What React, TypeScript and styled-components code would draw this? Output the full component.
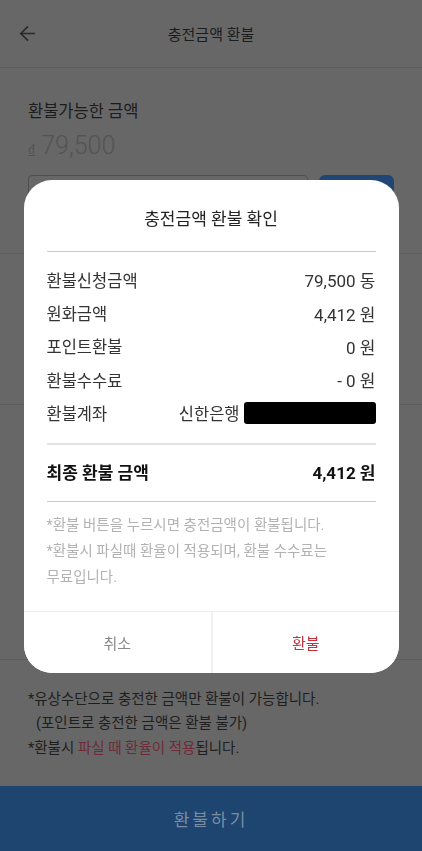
import React from "react";
import styled, { createGlobalStyle } from "styled-components";
import { ArrowLeft } from "lucide-react";

const GlobalStyle = createGlobalStyle`
  html, body { margin: 0; padding: 0; }
  body {
    background: #676767;
    font-family: Roboto, "Noto Sans CJK KR", "Noto Sans", sans-serif;
    -webkit-font-smoothing: antialiased;
  }
  * { box-sizing: border-box; }
`;

const Page = styled.div`
  min-height: 851px;
  display: flex;
  flex-direction: column;
  background: #676767;
`;

const Header = styled.header`
  height: 68px;
  display: grid;
  grid-template-columns: 56px 1fr 56px;
  align-items: center;
  border-bottom: 1px solid #5e5e5e;
`;

const BackButton = styled.button`
  border: 0;
  background: none;
  padding: 0 0 0 16px;
  display: flex;
  align-items: center;
  color: #2a2a2a;
`;

const HeaderTitle = styled.h1`
  margin: 0;
  text-align: center;
  font-size: 15px;
  font-weight: 400;
  color: #1c1c1c;
`;

const Section = styled.section<{ $h?: number }>`
  padding: 33px 28px 36px;
  border-bottom: 1px solid #5e5e5e;
  ${(p) => (p.$h ? `height: ${p.$h}px; padding: 0;` : "")}
`;

const Label = styled.div`
  font-size: 16.5px;
  line-height: 22px;
  color: #1c1c1c;
`;

const Amount = styled.div`
  display: flex;
  align-items: baseline;
  gap: 6px;
  margin-top: 8px;
  color: #545454;
  line-height: 30px;
`;

const Currency = styled.span`
  font-size: 12px;
  text-decoration: underline;
`;

const AmountValue = styled.span`
  font-size: 25px;
  font-weight: 300;
`;

const InputRow = styled.div`
  display: flex;
  gap: 11px;
  margin-top: 10px;
`;

const FakeInput = styled.div`
  flex: 1;
  height: 42px;
  border: 1px solid #4e4e4e;
  border-radius: 4px;
`;

const SmallBlue = styled.div`
  width: 75px;
  height: 42px;
  border-radius: 6px;
  background: #1f4675;
`;

const Notes = styled.div`
  padding: 28px 28px 0;
  font-size: 14.5px;
  line-height: 24px;
  color: #1e1e1e;
`;

const NoteLine = styled.p<{ $indent?: boolean; $gap?: number }>`
  margin: ${(p) => p.$gap ?? 0}px 0 0;
  padding-left: ${(p) => (p.$indent ? "8px" : "0")};
`;

const Red = styled.span`
  color: #6e2b37;
`;

const BottomButton = styled.button`
  margin-top: auto;
  height: 65px;
  border: 0;
  background: #1e4470;
  color: #7b8ca3;
  font-family: inherit;
  font-size: 17px;
  letter-spacing: 3px;
  width: 100%;
`;

const Backdrop = styled.div`
  position: fixed;
  inset: 0;
  display: flex;
  align-items: center;
  justify-content: center;
  padding-top: 2px;
`;

const Modal = styled.div`
  width: 375px;
  background: #fff;
  border-radius: 28px;
  overflow: hidden;
  display: flex;
  flex-direction: column;
`;

const ModalBody = styled.div`
  padding: 27px 23px 0;
`;

const ModalTitle = styled.h2`
  margin: 0;
  text-align: center;
  font-size: 17px;
  line-height: 24px;
  font-weight: 400;
  color: #222;
`;

const Divider = styled.hr<{ $top: number; $bottom: number; $color?: string; $w?: number }>`
  border: 0;
  height: ${(p) => p.$w ?? 1}px;
  background: ${(p) => p.$color ?? "#c9c9c9"};
  margin: ${(p) => p.$top}px 0 ${(p) => p.$bottom}px;
`;

const Rows = styled.div`
  display: flex;
  flex-direction: column;
`;

const Row = styled.div<{ $bold?: boolean }>`
  display: flex;
  align-items: center;
  justify-content: space-between;
  height: ${(p) => (p.$bold ? 24 : 33.4)}px;
  font-size: ${(p) => (p.$bold ? 17 : 16.5)}px;
  font-weight: ${(p) => (p.$bold ? 700 : 400)};
  color: ${(p) => (p.$bold ? "#111" : "#333")};
`;

const Value = styled.span`
  font-size: 17px;
`;

const Bank = styled.div`
  display: flex;
  align-items: center;
  gap: 4px;
`;

const Masked = styled.span`
  width: 132px;
  height: 22px;
  background: #000;
  border-radius: 3px;
`;

const ModalNotes = styled.div`
  font-size: 14.5px;
  line-height: 26px;
  color: #b2b2b2;
`;

const ModalNote = styled.p`
  margin: 0;
`;

const Actions = styled.div`
  margin-top: 20px;
  display: grid;
  grid-template-columns: 1fr 1fr;
  height: 62px;
  border-top: 1px solid #eee;
`;

const ActionButton = styled.button<{ $primary?: boolean }>`
  border: 0;
  background: #fff;
  font-family: inherit;
  font-size: 15px;
  color: ${(p) => (p.$primary ? "#c4303c" : "#888")};
  & + & {
    border-left: 2px solid #efefef;
  }
`;

const rows = [
  ["환불신청금액", "79,500 동"],
  ["원화금액", "4,412 원"],
  ["포인트환불", "0 원"],
  ["환불수수료", "- 0 원"],
];

export default function App() {
  return (
    <>
      <GlobalStyle />
      <Page>
        <Header>
          <BackButton aria-label="뒤로">
            <ArrowLeft size={23} strokeWidth={1.8} />
          </BackButton>
          <HeaderTitle>충전금액 환불</HeaderTitle>
          <span />
        </Header>
        <Section>
          <Label>환불가능한 금액</Label>
          <Amount>
            <Currency>đ</Currency>
            <AmountValue>79,500</AmountValue>
          </Amount>
          <InputRow>
            <FakeInput />
            <SmallBlue />
          </InputRow>
        </Section>
        <Section $h={151} />
        <Section $h={255} />
        <Notes>
          <NoteLine>*유상수단으로 충전한 금액만 환불이 가능합니다.</NoteLine>
          <NoteLine $indent>(포인트로 충전한 금액은 환불 불가)</NoteLine>
          <NoteLine $gap={1}>
            *환불시 <Red>파실 때 환율이 적용</Red>됩니다.
          </NoteLine>
        </Notes>
        <BottomButton>환불하기</BottomButton>
      </Page>
      <Backdrop>
        <Modal>
          <ModalBody>
            <ModalTitle>충전금액 환불 확인</ModalTitle>
            <Divider $top={20} $bottom={11} />
            <Rows>
              {rows.map(([k, v]) => (
                <Row key={k}>
                  <span>{k}</span>
                  <Value>{v}</Value>
                </Row>
              ))}
              <Row>
                <span>환불계좌</span>
                <Bank>
                  <span>신한은행</span>
                  <Masked />
                </Bank>
              </Row>
            </Rows>
            <Divider $top={13} $bottom={15} $color="#e2e2e2" $w={2} />
            <Row $bold>
              <span>최종 환불 금액</span>
              <span>4,412 원</span>
            </Row>
            <Divider $top={17} $bottom={11} />
            <ModalNotes>
              <ModalNote>*환불 버튼을 누르시면 충전금액이 환불됩니다.</ModalNote>
              <ModalNote>*환불시 파실때 환율이 적용되며, 환불 수수료는</ModalNote>
              <ModalNote>무료입니다.</ModalNote>
            </ModalNotes>
          </ModalBody>
          <Actions>
            <ActionButton>취소</ActionButton>
            <ActionButton $primary>환불</ActionButton>
          </Actions>
        </Modal>
      </Backdrop>
    </>
  );
}
